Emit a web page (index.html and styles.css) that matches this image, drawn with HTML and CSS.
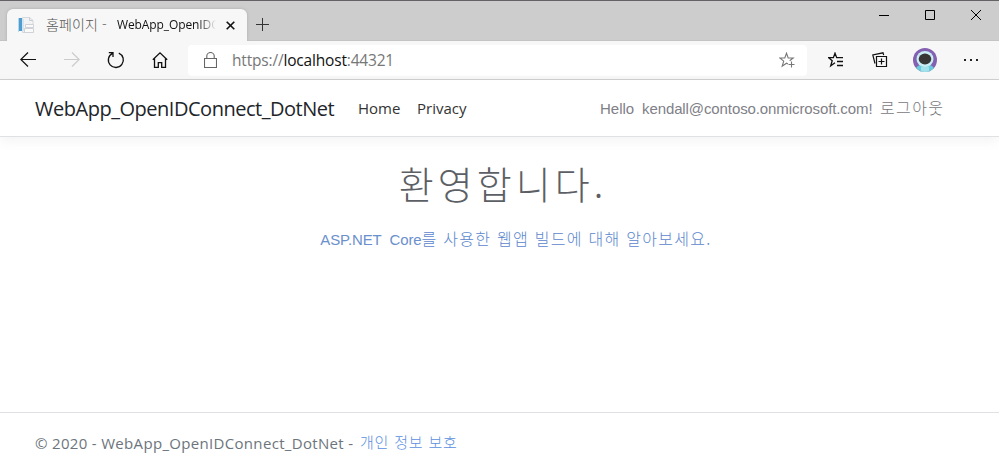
FILE: index.html
```html
<!DOCTYPE html>
<html lang="ko">
<head>
<meta charset="utf-8">
<title>홈페이지 - WebApp_OpenIDConnect_DotNet</title>
<link rel="stylesheet" href="styles.css">
</head>
<body>
<div class="tabstrip">
  <div class="tab">
    <svg class="favicon" width="16" height="16" viewBox="0 0 16 16"><path d="M4.500.5h7l3.500 3v12h-10.500z" fill="#f1f3f5" stroke="#d5d8dc"/><path d="M11.500.5v3h3.500" fill="none" stroke="#c9cdd2"/><path d="M7.500 7.500h8v3h-8zM6.500 11.500h9v4h-9z" fill="#fafafa" stroke="#cfd3d8"/><path d="M0 1h1v14H0z" fill="#b5d8ed"/><path d="M1 1h3v13H1z" fill="#4f9dcf"/><path d="M4 2h2v12H4z" fill="#d3e5f0"/></svg>
    <span class="tab-ko">홈페이지 -</span>
    <span class="tab-name">WebApp_OpenIDC</span>
    <svg class="tab-close" width="9" height="9" viewBox="0 0 9 9"><path d="M.7.7l7.600 7.600M8.300.7L.7 8.300" stroke="#111" stroke-width="1.600"/></svg>
  </div>
  <svg class="newtab" width="13" height="13" viewBox="0 0 13 13"><path d="M6.500 0v13M0 6.500h13" stroke="#333"/></svg>
  <div class="window-buttons">
    <svg width="10" height="10" viewBox="0 0 10 10"><path d="M0 5.500h10" stroke="#000"/></svg>
    <svg width="10" height="10" viewBox="0 0 10 10"><path d="M.5.5h9v9h-9z" fill="none" stroke="#000"/></svg>
    <svg width="10" height="10" viewBox="0 0 10 10"><path d="M0 0l10 10M10 0L0 10" stroke="#000"/></svg>
  </div>
</div>
<div class="toolbar">
  <div class="nav-icons">
    <svg width="16" height="16" viewBox="0 0 16 16"><path d="M16 7.500H.8M8 .5l-7.200 7 7.200 7" fill="none" stroke="#111" stroke-width="1.200"/></svg>
    <svg width="16" height="16" viewBox="0 0 16 16"><path d="M0 7.500h15.200M8 .5l7.200 7-7.200 7" fill="none" stroke="#ccc" stroke-width="1.200"/></svg>
    <svg width="18" height="18" viewBox="0 0 18 18"><path d="M11.800 2.100a7.500 7.500 0 1 1-6.300.2M1.800 1.700h4.200v4.200" fill="none" stroke="#111" stroke-width="1.300"/></svg>
    <svg width="16" height="16" viewBox="0 0 16 16"><path d="M.8 7.700L8 .9l7.200 6.800M2.500 6.500v9h3.800v-4.800h3.400v4.800h3.800v-9" fill="none" stroke="#111" stroke-width="1.300"/></svg>
  </div>
  <div class="address">
    <svg class="lock" width="13" height="17" viewBox="0 0 13 17"><path d="M.5 6.500h12v9H.5zM2.800 6.500V4a3.700 3.500 0 0 1 7.400 0v2.500" fill="none" stroke="#666" stroke-width="1.100"/></svg>
    <span class="url">https://<b>localhost</b>:44321</span>
    <svg class="star" width="17" height="17" viewBox="0 0 17 17"><path d="M9 12l-1.500-.8-4.300 3 1.500-5.100L.9 6h4.900L7.500 1.200 9.200 6h5l-3.500 2.800M12.500 9.500v6M9.500 12.500h6" fill="none" stroke="#777" stroke-width="1.100"/></svg>
  </div>
  <div class="tool-icons">
    <svg width="16" height="16" viewBox="0 0 16 16"><path d="M7 10.800l-4.300 3 1.500-5L.7 5.700h4.700L7 1.200l1.700 4.500H15M9 9.500h6M9 13.500h6" fill="none" stroke="#111" stroke-width="1.300"/></svg>
    <svg width="16" height="16" viewBox="0 0 16 16"><path d="M4.500 4.500h10v10h-10zM9.500 6.500v6M6.500 9.500h6M3 11.500L.8 3 11 .8l.7 2.400" fill="none" stroke="#111" stroke-width="1.200"/></svg>
    <svg width="24" height="24" viewBox="0 0 24 24"><defs><clipPath id="face"><circle cx="12" cy="12" r="12"/></clipPath></defs><g clip-path="url(#face)"><path d="M0 0h24v24H0z" fill="#8460b1"/><ellipse cx="12" cy="23" rx="10" ry="7" fill="#69cbdc"/><path d="M8 19h8v5H8z" fill="#a4e2eb"/><ellipse cx="12" cy="11" rx="8.500" ry="8" fill="#c8edf4"/><ellipse cx="12" cy="11" rx="6.300" ry="5.400" fill="#383634"/></g></svg>
    <svg width="14" height="4" viewBox="0 0 14 4"><path d="M0 1h2v2H0zM6 1h2v2H6zM12 1h2v2h-2z" fill="#222"/></svg>
  </div>
</div>
<header class="navbar">
  <a class="brand">WebApp_OpenIDConnect_DotNet</a>
  <a class="home">Home</a>
  <a class="privacy">Privacy</a>
  <span class="hello">Hello</span>
  <span class="email">kendall@contoso.onmicrosoft.com!</span>
  <a class="logout">로그아웃</a>
</header>
<main>
  <h1>환영합니다.</h1>
  <p><a><span class="aspnet">ASP.NET&nbsp; Core</span><span class="learn">를 사용한 웹앱 빌드에 대해 알아보세요.</span></a></p>
</main>
<footer>
  <span class="copy">© 2020 - WebApp_OpenIDConnect_DotNet -</span>
  <a class="policy">개인 정보 보호</a>
</footer>
</body>
</html>
```

FILE: styles.css
```css
* { box-sizing: border-box; }
body {
  margin: 0;
  height: 473px;
  display: flex;
  flex-direction: column;
  overflow: hidden;
  background: #fff;
  font: 16px/24px "Open Sans", "Noto Sans CJK KR", sans-serif;
  white-space: nowrap;
}
svg { display: block; flex: none; }
.tabstrip {
  height: 41px;
  display: flex;
  align-items: flex-start;
  background: #cdcdcd;
  border-top: 1px solid #646265;
  border-bottom: 1px solid #c4c4c4;
}
.tab {
  width: 240px;
  height: 32px;
  margin: 8px 0 0 7px;
  padding: 0 12px 0 11px;
  display: flex;
  align-items: center;
  background: #f7f7f7;
  border-radius: 6px 6px 0 0;
  box-shadow: 0 0 3px #aaa;
  clip-path: inset(-4px -4px 0 -4px);
}
.tab-ko {
  width: 71px;
  margin: -2px 0 0 12px;
  font: 300 14px/20px "Noto Sans CJK KR", sans-serif;
  letter-spacing: .1px;
  color: #555;
}
.tab-name {
  width: 99px;
  font-size: 12px;
  letter-spacing: -.1px;
  color: #111;
  mask-image: linear-gradient(90deg, #000 82%, transparent);
}
.tab-close { margin-left: 10px; }
.newtab { margin: 17px 0 0 9px; }
.window-buttons { display: flex; gap: 36px; margin: 9px 18px 0 auto; }
.toolbar {
  height: 39px;
  display: flex;
  align-items: center;
  background: #f7f7f7;
  border-bottom: 1px solid #d0d0d0;
}
.nav-icons { width: 188px; padding-left: 20px; display: flex; align-items: center; gap: 27px; }
.nav-icons svg:nth-child(2) { margin-left: 1px; }
.address {
  width: 619px;
  height: 31px;
  display: flex;
  align-items: center;
  padding: 0 11px 0 16px;
  background: #fff;
  border-radius: 4px;
}
.url { margin-left: 15px; font-size: 15.500px; letter-spacing: -.18px; color: #777; }
.url b { font-weight: 400; color: #111; }
.star { margin-left: auto; }
.tool-icons { flex: 1; padding-left: 21px; display: flex; align-items: center; gap: 28px; }
.tool-icons svg:nth-child(3) { margin-left: -3px; }
.tool-icons svg:nth-child(4) { margin-left: -1px; }
.navbar {
  height: 57px;
  display: flex;
  align-items: center;
  padding-left: 35px;
  border-bottom: 1px solid #dfe1e5;
  box-shadow: 0 4px 12px rgba(0, 0, 0, .05);
  color: #333;
}
.brand { width: 323px; padding-top: 2px; font-size: 20px; letter-spacing: -.48px; color: #212529; }
.home { width: 59px; font-size: 15px; }
.privacy { width: 183px; font-size: 15px; }
.hello, .email { padding-top: 2px; font-family: "Liberation Sans", sans-serif; color: #808087; }
.hello { width: 42px; font-size: 15px; }
.email { width: 238px; font-size: 15px; letter-spacing: -.1px; }
.logout { margin-top: -2px; font: 300 16px/24px "Noto Sans CJK KR", sans-serif; letter-spacing: 1.400px; color: #77777d; }
main { flex: 1; text-align: center; }
h1 {
  margin: 21px 0 0 7px;
  font: 300 38px/50px "Noto Sans CJK KR", sans-serif;
  letter-spacing: 4px;
  color: #5c6065;
}
p { margin: 18px 0 0 33px; color: #6b90cd; }
.aspnet { font-family: "Liberation Sans", sans-serif; font-size: 15px; letter-spacing: -.15px; }
.learn { font: 300 16px/24px "Noto Sans CJK KR", sans-serif; letter-spacing: 1.280px; color: #5c87cd; }
footer {
  height: 61px;
  display: flex;
  align-items: center;
  padding-left: 35px;
  border-top: 1px solid #dfe1e5;
  color: #6c757d;
}
.copy { width: 325px; font-size: 15px; letter-spacing: .32px; }
.policy { margin-top: -2px; font: 300 15px/24px "Noto Sans CJK KR", sans-serif; letter-spacing: .8px; color: #5c8fe0; }
```
